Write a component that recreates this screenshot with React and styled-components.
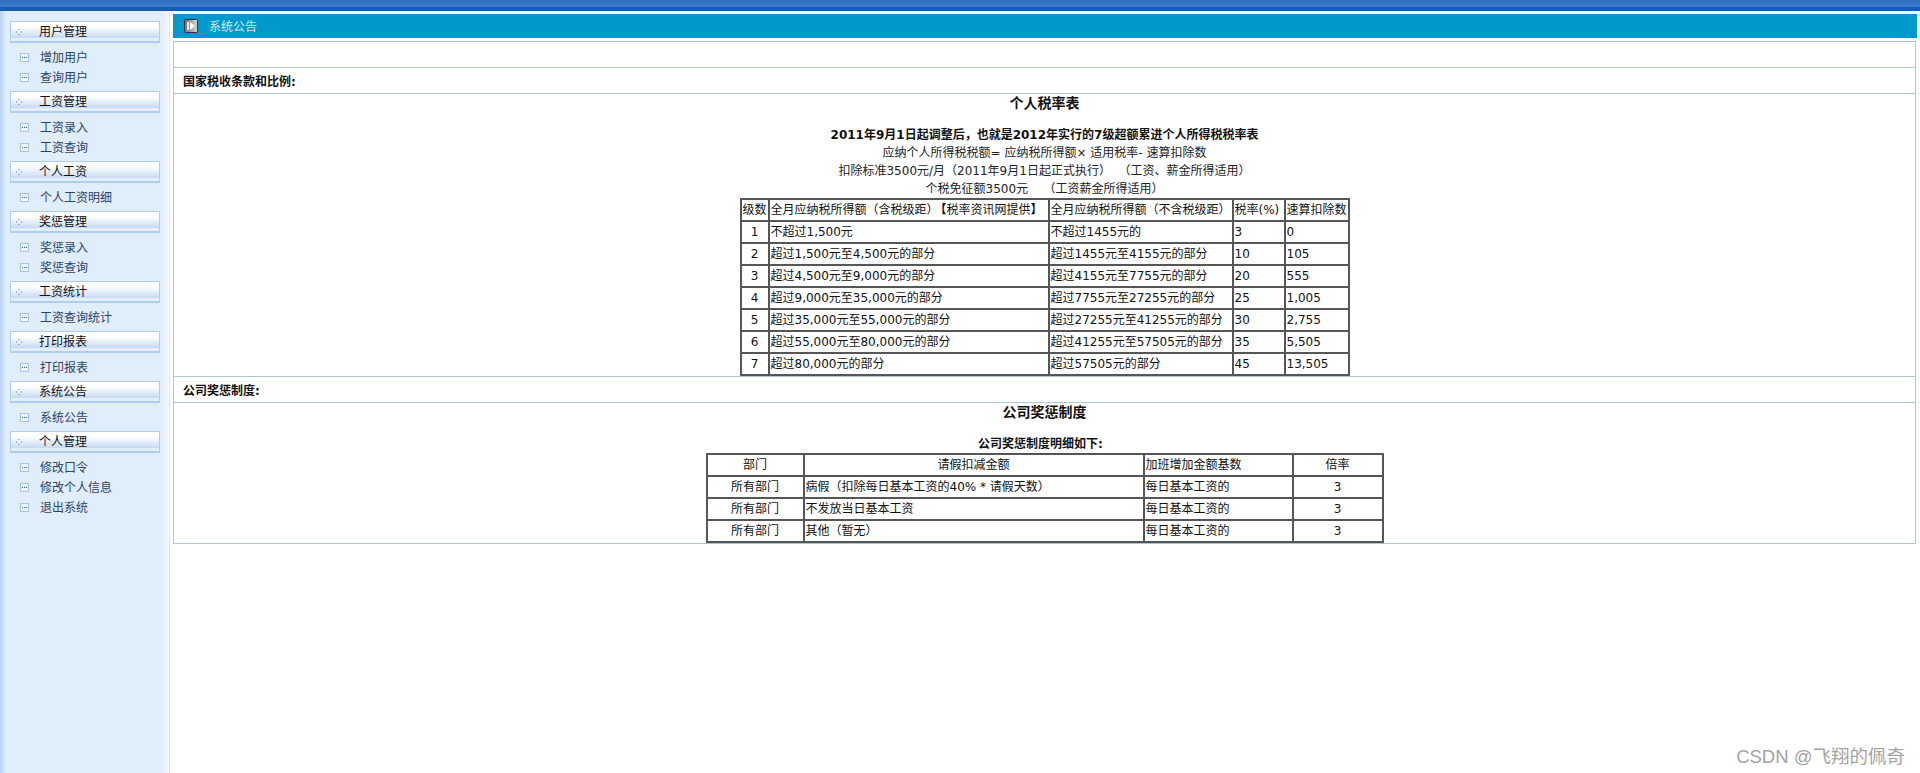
import React from "react";
import styled, { createGlobalStyle } from "styled-components";

const FONT = `"DejaVu Sans", "Noto Sans CJK SC", sans-serif`;

const GlobalStyle = createGlobalStyle`
  html, body {
    margin: 0;
    padding: 0;
    height: 100%;
    background: #fff;
    overflow: hidden;
  }
  body {
    font-family: ${FONT};
    font-size: 12px;
    color: #222;
  }
`;

const Page = styled.div`
  position: relative;
  height: 773px;
  display: flex;
  flex-direction: column;
`;

const TopBar = styled.div`
  height: 11px;
  flex: none;
  background: linear-gradient(180deg, #2f6cbd 0, #3a7ccc 7px, #1b5bb0 7px, #1b5bb0 11px);
`;

const Body = styled.div`
  flex: 1;
  display: flex;
`;

/* left menu */
const Sidebar = styled.aside`
  width: 168px;
  flex: none;
  box-sizing: border-box;
  padding: 10px 8px 0 10px;
  background: linear-gradient(90deg, #b7d2f1 0, #e0edfb 6px, #e0edfb 158px, #eef5fd 168px);
`;

const GroupHead = styled.div`
  height: 22px;
  box-sizing: border-box;
  display: flex;
  align-items: center;
  padding-bottom: 3px;
  border: 1px solid #aecdf0;
  border-bottom-width: 2px;
  background: linear-gradient(180deg, #fff 0, #fff 25%, #c6d9f1 85%, #e4eefa 85%);
  color: #111;
`;

const GroupIcon = styled.svg`
  width: 6px;
  height: 6px;
  margin: 3px 17px 0 5px;
  flex: none;
`;

const GroupList = styled.ul`
  list-style: none;
  margin: 0;
  padding: 4px 0;
`;

const GroupItem = styled.li`
  height: 20px;
  box-sizing: border-box;
  display: flex;
  align-items: center;
  padding-bottom: 2px;
  color: #2c4363;
`;

const ItemIcon = styled.svg`
  width: 9px;
  height: 9px;
  margin: 2px 11px 0 10px;
  flex: none;
`;

/* main area */
const Main = styled.main`
  flex: 1;
  min-width: 0;
  padding: 3px 3px 0 3px;
  margin-left: 1px;
  border-left: 1px solid #d9e5f2;
`;

const TitleBar = styled.div`
  height: 24px;
  box-sizing: border-box;
  display: flex;
  align-items: center;
  padding: 0 0 2px 11px;
  background: #0099cc;
  color: #d3e9f2;
  margin-bottom: 3px;
`;

const PlayIcon = styled.svg`
  width: 14px;
  height: 14px;
  margin: 2px 11px 0 0;
  flex: none;
`;

const Panel = styled.div`
  border: 1px solid #aec8d2;
  border-bottom: none;
  margin-right: 1px;
`;

const Row = styled.div`
  height: 25px;
  border-bottom: 1px solid #aec8d2;
  display: flex;
  align-items: center;
  padding-left: 9px;
  font-weight: bold;
  color: #111;
`;

const Content = styled.div`
  border-bottom: 1px solid #aec8d2;
  text-align: center;
  line-height: 18px;
`;

const SheetTitle = styled.div`
  font-size: 14px;
  font-weight: bold;
  color: #111;
  margin-bottom: 14px;
`;

const SubTitle = styled.div`
  font-weight: bold;
  color: #111;
  white-space: pre;
`;

const Line = styled.div`
  white-space: pre;
`;

const Sheet = styled.table`
  table-layout: fixed;
  width: ${(p) => p.$width}px;
  margin: 0 auto;
  border-collapse: collapse;
  text-align: left;
  line-height: 16px;
  color: #111;
`;

const Cell = styled.td`
  height: 22px;
  box-sizing: border-box;
  padding: 0 1px;
  border: 2px solid #565656;
  white-space: nowrap;
  text-align: ${(p) => (p.$center ? "center" : "left")};
`;

const Bracket = styled.strong`
  margin-left: ${(p) => p.$gap || 0}px;
`;

const Watermark = styled.div`
  position: absolute;
  right: 15px;
  top: 746px;
  font-family: "Liberation Sans", "Noto Sans CJK SC", sans-serif;
  font-size: 18.5px;
  line-height: 22px;
  color: #a3a3a3;
`;

const menu = [
  { head: "用户管理", items: ["增加用户", "查询用户"] },
  { head: "工资管理", items: ["工资录入", "工资查询"] },
  { head: "个人工资", items: ["个人工资明细"] },
  { head: "奖惩管理", items: ["奖惩录入", "奖惩查询"] },
  { head: "工资统计", items: ["工资查询统计"] },
  { head: "打印报表", items: ["打印报表"] },
  { head: "系统公告", items: ["系统公告"] },
  { head: "个人管理", items: ["修改口令", "修改个人信息", "退出系统"] },
];

const taxCols = [28, 280, 184, 52, 64];
const taxHead = [
  "级数",
  <>
    全月应纳税所得额（含税级距）<Bracket $gap={2}>【</Bracket>税率资讯网提供<Bracket>】</Bracket>
  </>,
  "全月应纳税所得额（不含税级距）",
  "税率(%)",
  "速算扣除数",
];
const taxRows = [
  ["1", "不超过1,500元", "不超过1455元的", "3", "0"],
  ["2", "超过1,500元至4,500元的部分", "超过1455元至4155元的部分", "10", "105"],
  ["3", "超过4,500元至9,000元的部分", "超过4155元至7755元的部分", "20", "555"],
  ["4", "超过9,000元至35,000元的部分", "超过7755元至27255元的部分", "25", "1,005"],
  ["5", "超过35,000元至55,000元的部分", "超过27255元至41255元的部分", "30", "2,755"],
  ["6", "超过55,000元至80,000元的部分", "超过41255元至57505元的部分", "35", "5,505"],
  ["7", "超过80,000元的部分", "超过57505元的部分", "45", "13,505"],
];

const prizeCols = [97, 340, 149, 90];
const prizeRows = [
  ["所有部门", "病假（扣除每日基本工资的40% * 请假天数）", "每日基本工资的", "3"],
  ["所有部门", "不发放当日基本工资", "每日基本工资的", "3"],
  ["所有部门", "其他（暂无）", "每日基本工资的", "3"],
];

const DotsGlyph = () => (
  <GroupIcon viewBox="0 0 6 6">
    <rect x="2.5" y="0" width="1" height="1" fill="#4f7fb8" />
    <rect x="0" y="2.5" width="1" height="1" fill="#4f7fb8" />
    <rect x="5" y="2.5" width="1" height="1" fill="#4f7fb8" />
    <rect x="2.5" y="5" width="1" height="1" fill="#4f7fb8" />
  </GroupIcon>
);

const BoxGlyph = () => (
  <ItemIcon viewBox="0 0 9 9">
    <rect x="0.5" y="0.5" width="8" height="8" fill="#f6faff" stroke="#a0c5ee" />
    <rect x="2" y="4" width="1" height="1" fill="#2f63a8" />
    <rect x="4" y="4" width="1" height="1" fill="#2f63a8" />
    <rect x="6" y="4" width="1" height="1" fill="#2f63a8" />
  </ItemIcon>
);

const PlayGlyph = () => (
  <PlayIcon viewBox="0 0 14 14">
    <defs>
      <linearGradient id="playFill" x1="0" y1="0" x2="1" y2="0">
        <stop offset="0" stopColor="#6c6c6c" />
        <stop offset="1" stopColor="#d8d8d8" />
      </linearGradient>
    </defs>
    <rect x="0.5" y="0.5" width="13" height="13" rx="1" fill="url(#playFill)" stroke="#333" />
    <rect x="3" y="3" width="2" height="8" fill="#e8e8e8" />
    <path d="M6 3 L11 7 L6 11 Z" fill="#fff" />
  </PlayIcon>
);

const TableCols = ({ widths }) => (
  <colgroup>
    {widths.map((w, i) => (
      <col key={i} width={w} />
    ))}
  </colgroup>
);

export default function App() {
  return (
    <Page>
      <GlobalStyle />
      <TopBar />
      <Body>
        <Sidebar>
          {menu.map((group, i) => (
            <div key={i}>
              <GroupHead>
                <DotsGlyph />
                {group.head}
              </GroupHead>
              <GroupList>
                {group.items.map((item) => (
                  <GroupItem key={item}>
                    <BoxGlyph />
                    {item}
                  </GroupItem>
                ))}
              </GroupList>
            </div>
          ))}
        </Sidebar>
        <Main>
          <TitleBar>
            <PlayGlyph />
            系统公告
          </TitleBar>
          <Panel>
            <Row />
            <Row>国家税收条款和比例:</Row>
            <Content>
              <SheetTitle>个人税率表</SheetTitle>
              <SubTitle>2011年9月1日起调整后，也就是2012年实行的7级超额累进个人所得税税率表</SubTitle>
              <Line>应纳个人所得税税额= 应纳税所得额× 适用税率- 速算扣除数</Line>
              <Line>扣除标准3500元/月（2011年9月1日起正式执行）  （工资、薪金所得适用）</Line>
              <Line>个税免征额3500元    （工资薪金所得适用）</Line>
              <Sheet $width={608}>
                <TableCols widths={taxCols} />
                <tbody>
                  <tr>
                    {taxHead.map((text, i) => (
                      <Cell key={i}>{text}</Cell>
                    ))}
                  </tr>
                  {taxRows.map((row) => (
                    <tr key={row[0]}>
                      {row.map((text, i) => (
                        <Cell key={i} $center={i === 0}>
                          {text}
                        </Cell>
                      ))}
                    </tr>
                  ))}
                </tbody>
              </Sheet>
            </Content>
            <Row>公司奖惩制度:</Row>
            <Content>
              <SheetTitle>公司奖惩制度</SheetTitle>
              <SubTitle>公司奖惩制度明细如下:  </SubTitle>
              <Sheet $width={676}>
                <TableCols widths={prizeCols} />
                <tbody>
                  <tr>
                    <Cell $center>部门</Cell>
                    <Cell $center>请假扣减金额</Cell>
                    <Cell>加班增加金额基数</Cell>
                    <Cell $center>倍率</Cell>
                  </tr>
                  {prizeRows.map((row, r) => (
                    <tr key={r}>
                      {row.map((text, i) => (
                        <Cell key={i} $center={i === 0 || i === 3}>
                          {text}
                        </Cell>
                      ))}
                    </tr>
                  ))}
                </tbody>
              </Sheet>
            </Content>
          </Panel>
        </Main>
      </Body>
      <Watermark>CSDN @飞翔的佩奇</Watermark>
    </Page>
  );
}
